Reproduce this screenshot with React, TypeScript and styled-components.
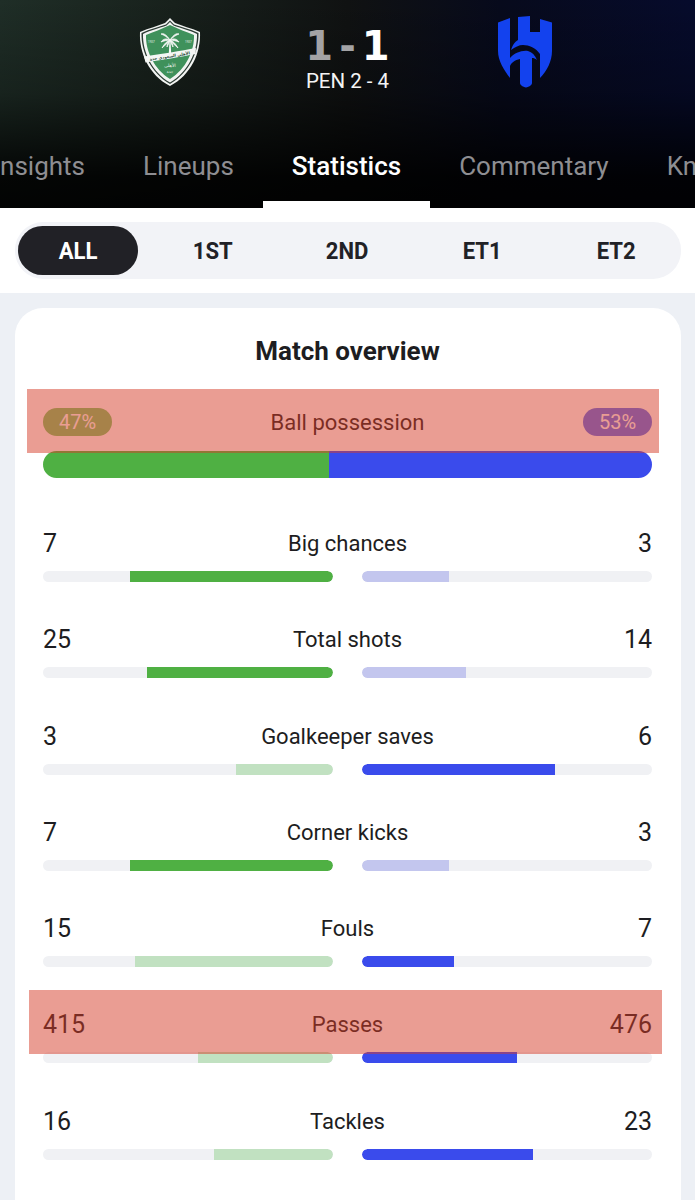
import React from "react";
import styled, { createGlobalStyle } from "styled-components";

const Global = createGlobalStyle`
  html, body { margin: 0; padding: 0; background: #edf0f5; }
  body { font-family: Roboto, "Liberation Sans", sans-serif; overflow: hidden; }
`;

const Page = styled.div`
  position: relative;
  width: 695px;
  height: 1200px;
  overflow: hidden;
  background: #edf0f5;
`;

const Header = styled.header`
  height: 208px;
  display: flex;
  flex-direction: column;
  background:
    linear-gradient(to bottom, rgba(0, 0, 0, 0) 0%, rgba(0, 0, 0, 0.25) 45%, rgba(0, 0, 0, 0.88) 85%, rgba(0, 0, 0, 0.92) 100%),
    linear-gradient(90deg, #1f2e27 0%, #18211c 25%, #101212 50%, #070a1c 72%, #060b2c 100%);
`;

const MatchRow = styled.div`
  height: 133px;
  display: grid;
  grid-template-columns: 139px 62px 1fr 55px 142px;
  padding-top: 17px;
  box-sizing: border-box;
`;

const CrestSlot = styled.div<{ $column: number }>`
  grid-column: ${(p) => p.$column};
`;

const Center = styled.div`
  grid-column: 3;
  display: flex;
  flex-direction: column;
  align-items: center;
  padding: 7px 4px 0 0;
`;

const Score = styled.div`
  display: flex;
  align-items: center;
  gap: 6px;
  height: 44px;
  font-family: "DejaVu Sans", sans-serif;
  font-weight: 700;
  font-size: 40px;
  line-height: 44px;
`;

const ScorePart = styled.span<{ $dim?: boolean }>`
  color: ${(p) => (p.$dim ? "#a3a3a5" : "#ffffff")};
`;

const Pen = styled.div`
  margin-top: 1px;
  color: #f4f4f4;
  font-size: 20.5px;
  line-height: 24px;
`;

const Tabs = styled.nav`
  height: 75px;
  display: flex;
  margin-left: -36px;
  overflow: hidden;
`;

const Tab = styled.div<{ $active?: boolean }>`
  flex: none;
  box-sizing: border-box;
  height: 75px;
  padding: 0 29px 2px;
  display: flex;
  align-items: center;
  font-size: 26px;
  color: ${(p) => (p.$active ? "#ffffff" : "#8e8e92")};
  font-weight: ${(p) => (p.$active ? 500 : 400)};
  border-bottom: 7px solid ${(p) => (p.$active ? "#ffffff" : "transparent")};
`;

const SegmentBand = styled.section`
  height: 85px;
  background: #fff;
  padding: 14px 14px 0 15px;
  box-sizing: border-box;
`;

const Segments = styled.div`
  height: 57px;
  border-radius: 28px;
  background: #f2f3f7;
  display: grid;
  grid-template-columns: 127.5px repeat(4, 134.5px);
  padding: 4px 0 4px 3px;
  box-sizing: border-box;
`;

const Segment = styled.div<{ $active?: boolean }>`
  display: flex;
  align-items: center;
  justify-content: center;
  border-radius: 25px;
  margin-right: ${(p) => (p.$active ? "7.5px" : "0")};
  background: ${(p) => (p.$active ? "#212126" : "transparent")};
  color: ${(p) => (p.$active ? "#ffffff" : "#212126")};
`;

const SegmentLabel = styled.span`
  display: inline-block;
  font-size: 24px;
  font-weight: 700;
  transform: scaleX(0.92);
`;

const Card = styled.main`
  margin: 15px 14px 0 15px;
  height: 960px;
  background: #fff;
  border-radius: 28px 28px 0 0;
  padding: 28px 29px 0 28px;
  box-sizing: border-box;
`;

const Title = styled.h2`
  margin: 0;
  height: 30px;
  line-height: 30px;
  text-align: center;
  font-size: 26px;
  font-weight: 700;
  color: #1d1d21;
`;

const PossessionHead = styled.div`
  margin-top: 42px;
  height: 28px;
  display: flex;
  align-items: center;
  justify-content: space-between;
`;

const Pill = styled.span<{ $color: string }>`
  width: 69px;
  height: 28px;
  border-radius: 14px;
  background: ${(p) => p.$color};
  color: #fff;
  display: flex;
  align-items: center;
  justify-content: center;
  font-size: 20px;
`;

const StatName = styled.span`
  font-size: 22px;
  color: #1d1d21;
`;

const PossessionBar = styled.div`
  margin-top: 15px;
  height: 27px;
  border-radius: 14px;
  overflow: hidden;
  display: flex;
`;

const PossessionFill = styled.div<{ $color: string }>`
  background: ${(p) => p.$color};
`;

const Rows = styled.div`
  margin-top: 52px;
  display: flex;
  flex-direction: column;
  gap: 64.25px;
`;

const Row = styled.div`
  height: 32px;
  display: flex;
  flex-direction: column;
`;

const RowHead = styled.div`
  height: 38px;
  margin-top: -1px;
  display: flex;
  align-items: center;
  justify-content: space-between;
`;

const Value = styled.span`
  font-size: 25px;
  color: #1d1d21;
  min-width: 40px;
  &:last-child { text-align: right; }
`;

const BarPair = styled.div`
  display: grid;
  grid-template-columns: 290px 290px;
  justify-content: space-between;
  margin-top: 13px;
`;

const Track = styled.div<{ $side: "left" | "right" }>`
  height: 11px;
  border-radius: 6px;
  background: #f0f1f4;
  overflow: hidden;
  display: flex;
  justify-content: ${(p) => (p.$side === "left" ? "flex-end" : "flex-start")};
`;

const Fill = styled.div<{ $color: string; $side: "left" | "right" }>`
  height: 100%;
  background: ${(p) => p.$color};
  border-radius: ${(p) => (p.$side === "left" ? "0 6px 6px 0" : "6px 0 0 6px")};
`;

const Redaction = styled.div<{ $left: number; $top: number; $width: number }>`
  position: absolute;
  left: ${(p) => p.$left}px;
  top: ${(p) => p.$top}px;
  width: ${(p) => p.$width}px;
  height: 64px;
  background: rgba(214, 60, 40, 0.5);
`;

const GREEN = "#4fb043";
const LIGHT_GREEN = "#c1e1c1";
const BLUE = "#3a4bec";
const LIGHT_BLUE = "#c3c6ee";

const stats = [
  { name: "Big chances", a: "7", b: "3", l: 203, r: 87, win: "a" },
  { name: "Total shots", a: "25", b: "14", l: 186, r: 104, win: "a" },
  { name: "Goalkeeper saves", a: "3", b: "6", l: 97, r: 193, win: "b" },
  { name: "Corner kicks", a: "7", b: "3", l: 203, r: 87, win: "a" },
  { name: "Fouls", a: "15", b: "7", l: 198, r: 92, win: "b" },
  { name: "Passes", a: "415", b: "476", l: 135, r: 155, win: "b" },
  { name: "Tackles", a: "16", b: "23", l: 119, r: 171, win: "b" },
];

const AhliCrest = () => (
  <svg width="62" height="70" viewBox="0 0 62 70">
    <path d="M31 1 L36 6 C43 9 52 11 61 15 C62 36 52 58 31 69 C10 58 0 36 1 15 C10 11 19 9 26 6 Z" fill="#f2f4f2" />
    <path d="M31 3.5 L35 7.5 C42 10 51 12 59.5 16 C60 35 50 56 31 67 C12 56 2 35 2.5 16 C11 12 20 10 27 7.5 Z" fill="#2b3a33" />
    <path d="M31 5 L34.5 8.5 C41 11 50 13 58 17 C58.5 35 49 55 31 65.5 C13 55 3.5 35 4 17 C12 13 21 11 27.5 8.5 Z" fill="#f2f4f2" />
    <path d="M31 8 C39 12 48 15 55 18 C55.5 34 47 52 31 62 C15 52 6.5 34 7 18 C14 15 23 12 31 8 Z" fill="#3f915b" />
    <path d="M29.8 37 L30.5 23 L31.5 23 L32.2 37 Z" fill="#f4f6f4" />
    <path d="M31 23 C27 17 24 16 22 17 C25 18 28 20 31 23 C27 21 24 22 22 25 C25 24 28 23 31 23 C28 24 25 27 23 31 C26 28 29 26 31 23 C29 25 28 28 28 30 C29 28 30 26 31 23 C32 26 33 28 34 30 C34 28 33 25 31 23 C33 26 36 28 39 31 C37 27 34 24 31 23 C34 23 37 24 40 25 C38 22 35 21 31 23 C34 20 37 18 40 17 C38 16 35 17 31 23 Z" fill="#f4f6f4" stroke="#f4f6f4" strokeWidth="0.8" />
    <text x="9" y="26" fontSize="3" fill="#e4efe6" fontFamily="Roboto, sans-serif">1937</text>
    <text x="46" y="26" fontSize="3" fill="#e4efe6" fontFamily="Roboto, sans-serif">1937</text>
    <path d="M5 39.5 C22 37 42 34 57 31 L56.5 37 C42 40 22 43 6.5 45.5 Z" fill="#f4f6f4" />
    <text x="31" y="40.5" textAnchor="middle" fontSize="4" fontWeight="700" fill="#274a36" fontFamily="'DejaVu Sans', sans-serif" transform="rotate(-9 31 40.5)">الأهلي السعودي جدة</text>
    <text x="31" y="49.5" textAnchor="middle" fontSize="4.5" fill="#eef4ef" fontFamily="'DejaVu Sans', sans-serif">الأهلي</text>
    <text x="31" y="55.5" textAnchor="middle" fontSize="4" fill="#eef4ef" fontFamily="'DejaVu Sans', sans-serif">جدة</text>
  </svg>
);

const HilalCrest = () => (
  <svg width="55" height="70" viewBox="0 0 55 70" fill="#1342ee" overflow="visible">
    <path d="M0 5.5 L12 1 V41 C16 36 24 33 30 34 C34 35 37 38 39 43 C37 41.500 36 41 34 41 V66 C34 68 31 70 28 70.500 C25 70 22 68 22 66 V42 C17 43 13 46 12 49 V61 C6 53 0 44 0 34 Z" />
    <path d="M20 0 L32 -1 V15 H42 V2 L54 5.5 V34 C54 44 49 54 42 61 V37 C38 31 31 28 25 28 C21 28 17 30 13 33 C15 27 17 25 20 23 Z" />
  </svg>
);

export default function App() {
  return (
    <Page>
      <Global />
      <Header>
        <MatchRow>
          <CrestSlot $column={2}><AhliCrest /></CrestSlot>
          <Center>
            <Score>
              <ScorePart $dim>1</ScorePart>
              <ScorePart $dim>-</ScorePart>
              <ScorePart>1</ScorePart>
            </Score>
            <Pen>PEN 2 - 4</Pen>
          </Center>
          <CrestSlot $column={4}><HilalCrest /></CrestSlot>
        </MatchRow>
        <Tabs>
          <Tab>Insights</Tab>
          <Tab>Lineups</Tab>
          <Tab $active>Statistics</Tab>
          <Tab>Commentary</Tab>
          <Tab>Knockout</Tab>
        </Tabs>
      </Header>
      <SegmentBand>
        <Segments>
          {["ALL", "1ST", "2ND", "ET1", "ET2"].map((s, i) => (
            <Segment key={s} $active={i === 0}><SegmentLabel>{s}</SegmentLabel></Segment>
          ))}
        </Segments>
      </SegmentBand>
      <Card>
        <Title>Match overview</Title>
        <PossessionHead>
          <Pill $color={"#78c86a"}>47%</Pill>
          <StatName>Ball possession</StatName>
          <Pill $color={"#5a6ff0"}>53%</Pill>
        </PossessionHead>
        <PossessionBar>
          <PossessionFill $color={GREEN} style={{ width: 286 }} />
          <PossessionFill $color={BLUE} style={{ flex: 1 }} />
        </PossessionBar>
        <Rows>
          {stats.map((s) => (
            <Row key={s.name}>
              <RowHead>
                <Value>{s.a}</Value>
                <StatName>{s.name}</StatName>
                <Value>{s.b}</Value>
              </RowHead>
              <BarPair>
                <Track $side="left">
                  <Fill $side="left" $color={s.win === "a" ? GREEN : LIGHT_GREEN} style={{ width: s.l }} />
                </Track>
                <Track $side="right">
                  <Fill $side="right" $color={s.win === "b" ? BLUE : LIGHT_BLUE} style={{ width: s.r }} />
                </Track>
              </BarPair>
            </Row>
          ))}
        </Rows>
      </Card>
      <Redaction $left={27} $top={389} $width={632} />
      <Redaction $left={29} $top={990} $width={633} />
    </Page>
  );
}
